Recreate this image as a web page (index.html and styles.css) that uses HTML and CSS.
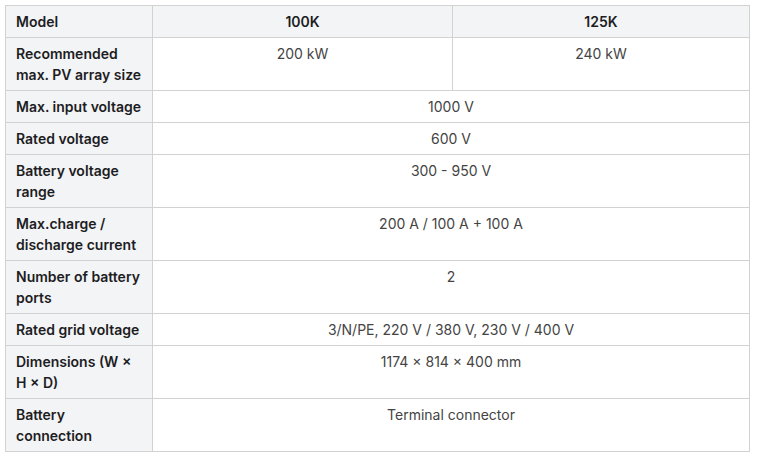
FILE: index.html
```html
<!DOCTYPE html>
<html lang="en">
<head>
<meta charset="utf-8">
<title>Specs</title>
<link rel="stylesheet" href="styles.css">
</head>
<body>
<table class="spec">
  <colgroup>
    <col class="c-label">
    <col class="c-a">
    <col class="c-b">
  </colgroup>
  <thead>
    <tr>
      <th class="label">Model</th>
      <th class="head">100K</th>
      <th class="head">125K</th>
    </tr>
  </thead>
  <tbody>
    <tr>
      <th class="label">Recommended max. PV array size</th>
      <td>200 kW</td>
      <td>240 kW</td>
    </tr>
    <tr>
      <th class="label">Max. input voltage</th>
      <td colspan="2">1000 V</td>
    </tr>
    <tr>
      <th class="label">Rated voltage</th>
      <td colspan="2">600 V</td>
    </tr>
    <tr>
      <th class="label">Battery voltage range</th>
      <td colspan="2">300 - 950 V</td>
    </tr>
    <tr>
      <th class="label">Max.charge / discharge current</th>
      <td colspan="2">200 A / 100 A + 100 A</td>
    </tr>
    <tr>
      <th class="label">Number of battery ports</th>
      <td colspan="2">2</td>
    </tr>
    <tr>
      <th class="label">Rated grid voltage</th>
      <td colspan="2">3/N/PE, 220 V / 380 V, 230 V / 400 V</td>
    </tr>
    <tr>
      <th class="label">Dimensions (W × H × D)</th>
      <td colspan="2">1174 × 814 × 400 mm</td>
    </tr>
    <tr>
      <th class="label">Battery connection</th>
      <td colspan="2">Terminal connector</td>
    </tr>
  </tbody>
</table>
</body>
</html>
```
FILE: styles.css
```css
html, body {
  margin: 0;
  padding: 0;
  background: #ffffff;
}
body {
  padding: 5px 0 0 5px;
  font-family: Inter, "Noto Sans", sans-serif;
  font-size: 14px;
  line-height: 21px;
  color: #333;
}
.spec {
  border-collapse: collapse;
  table-layout: fixed;
  width: 744px;
}
.c-label { width: 147px; }
.c-a { width: 300px; }
.c-b { width: 297px; }
.spec th, .spec td {
  border: 1px solid #d2d2d2;
  padding: 5px 10px;
  vertical-align: top;
}
.spec th.label {
  background: #f3f4f6;
  text-align: left;
  font-weight: 600;
  color: #1d1d1f;
}
.spec th.head {
  background: #f3f4f6;
  text-align: center;
  font-weight: 600;
  color: #1d1d1f;
}
.spec td {
  text-align: center;
  color: #444;
  font-weight: 400;
}
```
